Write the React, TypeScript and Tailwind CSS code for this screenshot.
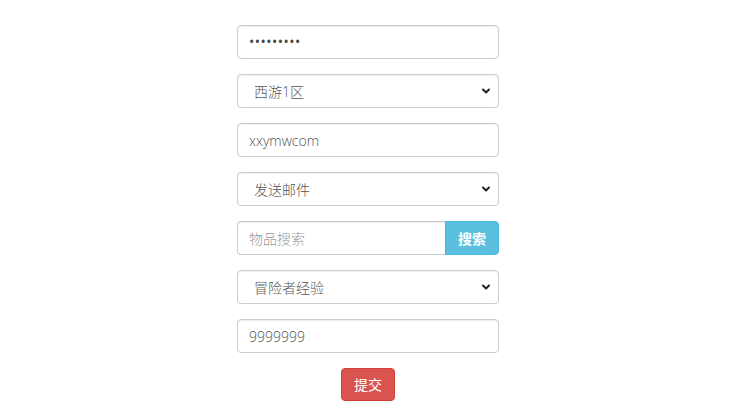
import React from 'react';

const font = { fontFamily: '"Open Sans", "Noto Sans CJK SC", sans-serif' };

function Chevron() {
    return (
        <svg width="10" height="10" viewBox="0 0 10 10" className="absolute right-[7px] top-1/2 -translate-y-1/2 pointer-events-none">
            <path d="M2 3.5 L5 6.5 L8 3.5" fill="none" stroke="#222" strokeWidth="2" strokeLinecap="round" strokeLinejoin="round" />
        </svg>
    );
}

function SelectBox({ value }: { value: string }) {
    return (
        <div className="relative h-[34px] w-full rounded-[4px] border border-[#ccc] bg-white shadow-[inset_0_1px_1px_rgba(0,0,0,0.075)]">
            <div className="flex h-full items-center pl-[16px] text-[14px] font-light text-[#555]">{value}</div>
            <Chevron />
        </div>
    );
}

function TextBox({ value, placeholder }: { value?: string; placeholder?: string }) {
    return (
        <input
            readOnly
            value={value}
            placeholder={placeholder}
            style={font}
            className="h-[34px] w-full rounded-[4px] border border-[#ccc] bg-white px-[11px] text-[14px] font-light text-[#555] shadow-[inset_0_1px_1px_rgba(0,0,0,0.075)] outline-none placeholder:text-[#999]"
        />
    );
}

export default function App() {
    return (
        <div className="flex min-h-[412px] justify-center bg-white pl-[5px] pt-[25px]" style={font}>
            <div className="flex w-[262px] flex-col gap-[15px]">
                <div className="flex h-[34px] w-full items-center rounded-[4px] border border-[#ccc] bg-white px-[11px] shadow-[inset_0_1px_1px_rgba(0,0,0,0.075)]">
                    <span className="text-[14px] leading-none tracking-[0.5px] text-[#444]">•••••••••</span>
                </div>
                <SelectBox value="西游1区" />
                <TextBox value="xxymwcom" />
                <SelectBox value="发送邮件" />
                <div className="flex h-[34px] w-full">
                    <input
                        readOnly
                        placeholder="物品搜索"
                        style={font}
                        className="h-full min-w-0 flex-1 rounded-l-[4px] border border-r-0 border-[#ccc] bg-white px-[11px] text-[14px] font-light text-[#555] shadow-[inset_0_1px_1px_rgba(0,0,0,0.075)] outline-none placeholder:text-[#999]"
                    />
                    <button className="h-full w-[54px] rounded-r-[4px] border border-[#46b8da] bg-[#5bc0de] text-[14px] font-bold text-white">
                        搜索
                    </button>
                </div>
                <SelectBox value="冒险者经验" />
                <TextBox value="9999999" />
                <div className="flex justify-center">
                    <button className="h-[33px] w-[54px] rounded-[4px] border border-[#d43f3a] bg-[#d9534f] text-[14px] text-white">
                        提交
                    </button>
                </div>
            </div>
        </div>
    );
}
